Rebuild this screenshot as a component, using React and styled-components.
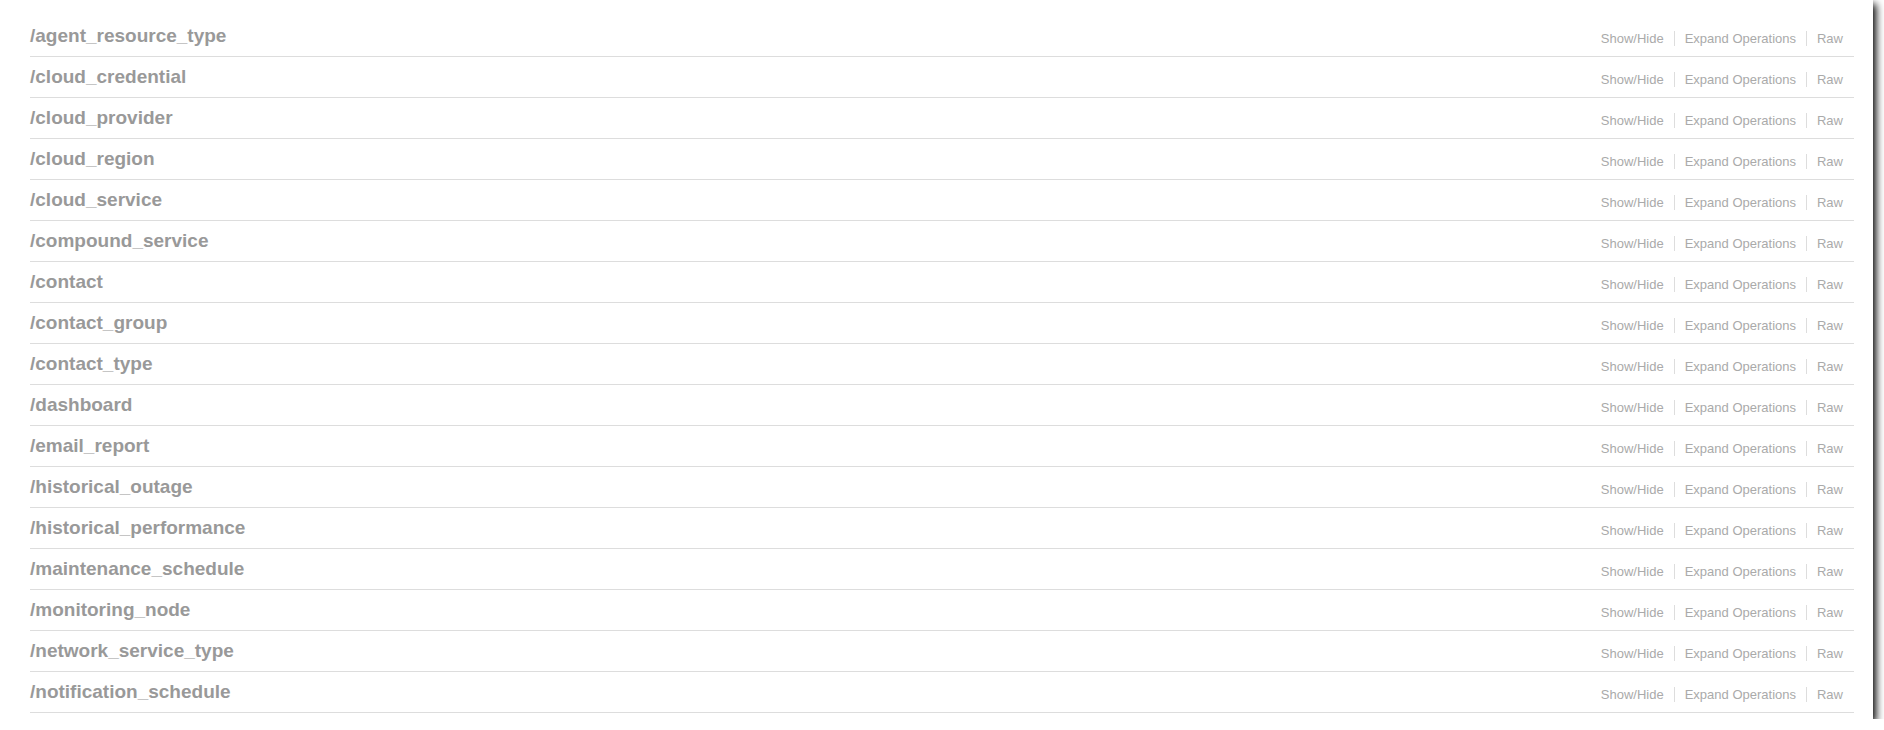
import React from 'react';
import styled, { createGlobalStyle } from 'styled-components';

const resources = [
  'agent_resource_type',
  'cloud_credential',
  'cloud_provider',
  'cloud_region',
  'cloud_service',
  'compound_service',
  'contact',
  'contact_group',
  'contact_type',
  'dashboard',
  'email_report',
  'historical_outage',
  'historical_performance',
  'maintenance_schedule',
  'monitoring_node',
  'network_service_type',
  'notification_schedule',
];

const options = ['Show/Hide', 'Expand Operations', 'Raw'];

const App = () => {
  return (
    <>
      <GlobalStyle />
      <Window>
        <ResourceList>
          {resources.map((name) => (
            <Resource key={name}>
              <Title href="#">/{name}</Title>
              <Options>
                {options.map((opt) => (
                  <Option key={opt}>
                    <OptionLink href="#">{opt}</OptionLink>
                  </Option>
                ))}
              </Options>
            </Resource>
          ))}
        </ResourceList>
      </Window>
    </>
  );
};

const GlobalStyle = createGlobalStyle`
  html, body {
    margin: 0;
    padding: 0;
    background: #fff;
  }
  body {
    font-family: "Liberation Sans", Arial, Helvetica, sans-serif;
    overflow: hidden;
  }
`;

const Window = styled.div`
  width: 1873px;
  height: 719px;
  background: #fff;
  overflow: hidden;
  box-shadow: 3px 4px 8px #000;
`;

const ResourceList = styled.ul`
  list-style: none;
  margin: 0;
  padding: 16px 19px 0 30px;
`;

const Resource = styled.li`
  display: flex;
  justify-content: space-between;
  align-items: flex-start;
  height: 40px;
  border-bottom: 1px solid #ddd;
`;

const Title = styled.a`
  display: block;
  padding-top: 9px;
  font-size: 19px;
  line-height: 22px;
  font-weight: bold;
  color: #999;
  text-decoration: none;
`;

const Options = styled.ul`
  display: flex;
  list-style: none;
  margin: 0;
  padding: 15px 0 0 0;
`;

const Option = styled.li`
  padding: 0 10px;
  font-size: 13px;
  line-height: 15px;
  border-right: 1px solid #ddd;

  &:last-child {
    border-right: none;
    padding-right: 11px;
  }
`;

const OptionLink = styled.a`
  color: #aaa;
  text-decoration: none;
`;

export default App;
